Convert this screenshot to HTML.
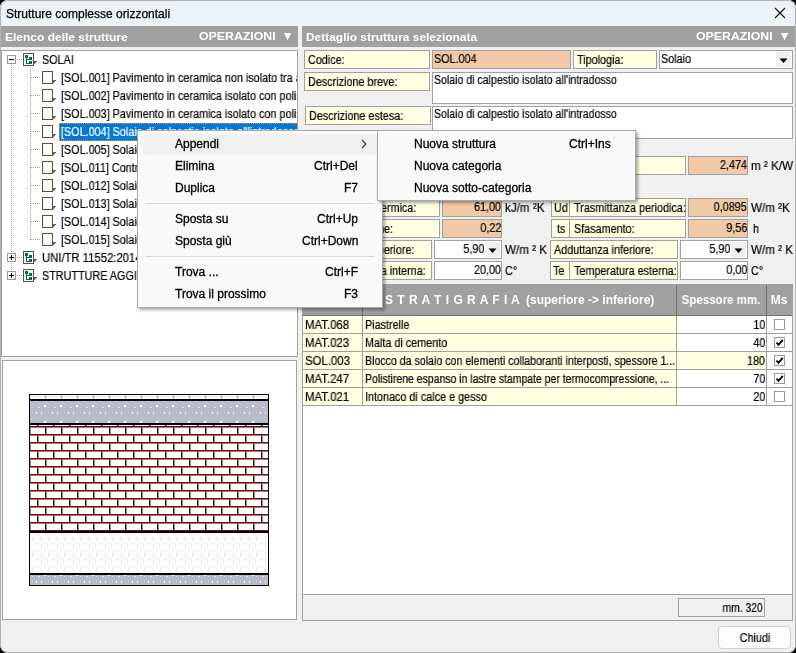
<!DOCTYPE html>
<html><head><meta charset="utf-8">
<style>
*{margin:0;padding:0;box-sizing:border-box}
html,body{width:796px;height:653px;overflow:hidden;background:#000}
body{font-family:"Liberation Sans",sans-serif;font-size:12px;color:#000;position:relative}
.a{position:absolute}
.t{position:absolute;white-space:nowrap;will-change:transform;-webkit-text-stroke:0.2px currentColor}
</style></head><body>
<div class="a" style="left:0;top:0;width:796px;height:653px;background:#f0f0f0;border-radius:8px;overflow:hidden">

<div class="a" style="left:0px;top:0px;width:796px;height:26px;background:#edf2f6;"></div>
<div class="t" style="left:6px;top:7.84px;font-size:12px;line-height:12px;color:#000;transform:scaleX(1.0);transform-origin:0 0;-webkit-text-stroke:0.25px #000">Strutture complesse orizzontali</div>
<svg class="a" style="left:774px;top:7px" width="12" height="12" viewBox="0 0 12 12"><path d="M1 1L11 11M11 1L1 11" stroke="#111" stroke-width="1.1"/></svg>
<div class="a" style="left:1px;top:26px;width:297px;height:21px;background:#a0a0a0;"></div>
<div class="t" style="left:5px;top:31.69px;font-size:11px;line-height:11px;color:#fff;font-weight:bold;-webkit-text-stroke:0;transform:scaleX(1.09);transform-origin:0 0;">Elenco delle strutture</div>
<div class="t" style="left:199px;top:30.69px;font-size:11px;line-height:11px;color:#fff;font-weight:bold;-webkit-text-stroke:0;transform:scaleX(1.12);transform-origin:0 0;">OPERAZIONI</div>
<svg class="a" style="left:284px;top:33px" width="8" height="8" viewBox="0 0 8 8"><path d="M0 0H7.2L3.6 7.2Z" fill="#fff"/></svg>
<div class="a" style="left:302px;top:26px;width:493px;height:21px;background:#a0a0a0;"></div>
<div class="t" style="left:306px;top:31.69px;font-size:11px;line-height:11px;color:#fff;font-weight:bold;-webkit-text-stroke:0;transform:scaleX(1.085);transform-origin:0 0;">Dettaglio struttura selezionata</div>
<div class="t" style="left:696px;top:30.69px;font-size:11px;line-height:11px;color:#fff;font-weight:bold;-webkit-text-stroke:0;transform:scaleX(1.12);transform-origin:0 0;">OPERAZIONI</div>
<svg class="a" style="left:781px;top:33px" width="8" height="8" viewBox="0 0 8 8"><path d="M0 0H7.2L3.6 7.2Z" fill="#fff"/></svg>
<div class="a" style="left:1px;top:50px;width:297px;height:307px;background:#fff;border:1px solid #a0a0a0;"></div>
<div class="a" style="left:2px;top:51px;width:295px;height:305px;overflow:hidden">
<div class="t" style="left:40px;top:2.84px;font-size:12px;line-height:12px;color:#000;transform:scaleX(0.9);transform-origin:0 0;">SOLAI</div>
<div class="t" style="left:59px;top:20.84px;font-size:12px;line-height:12px;color:#000;transform:scaleX(0.9);transform-origin:0 0;">[SOL.001] Pavimento in ceramica non isolato tra ambienti</div>
<div class="t" style="left:59px;top:38.84px;font-size:12px;line-height:12px;color:#000;transform:scaleX(0.9);transform-origin:0 0;">[SOL.002] Pavimento in ceramica isolato con polistirene</div>
<div class="t" style="left:59px;top:56.84px;font-size:12px;line-height:12px;color:#000;transform:scaleX(0.9);transform-origin:0 0;">[SOL.003] Pavimento in ceramica isolato con polistirene espanso</div>
<div class="a" style="left:57px;top:72px;width:344px;height:18px;background:#0078d7;"></div>
<svg class="a" style="left:57px;top:72px" width="250" height="18" shape-rendering="crispEdges"><path d="M0 0.5H250M0 17.5H250M0.5 0V18" stroke="#ff9020" stroke-width="1" stroke-dasharray="1 1"/></svg>
<div class="t" style="left:59px;top:74.84px;font-size:12px;line-height:12px;color:#fff;transform:scaleX(0.9);transform-origin:0 0;">[SOL.004] Solaio di calpestio isolato all&#x27;intradosso</div>
<div class="t" style="left:59px;top:92.84px;font-size:12px;line-height:12px;color:#000;transform:scaleX(0.9);transform-origin:0 0;">[SOL.005] Solaio di copertura</div>
<div class="t" style="left:59px;top:110.84px;font-size:12px;line-height:12px;color:#000;transform:scaleX(0.9);transform-origin:0 0;">[SOL.011] Controsoffitto</div>
<div class="t" style="left:59px;top:128.84px;font-size:12px;line-height:12px;color:#000;transform:scaleX(0.9);transform-origin:0 0;">[SOL.012] Solaio in laterocemento</div>
<div class="t" style="left:59px;top:146.84px;font-size:12px;line-height:12px;color:#000;transform:scaleX(0.9);transform-origin:0 0;">[SOL.013] Solaio in legno</div>
<div class="t" style="left:59px;top:164.84px;font-size:12px;line-height:12px;color:#000;transform:scaleX(0.9);transform-origin:0 0;">[SOL.014] Solaio piano</div>
<div class="t" style="left:59px;top:182.84px;font-size:12px;line-height:12px;color:#000;transform:scaleX(0.9);transform-origin:0 0;">[SOL.015] Solaio inclinato</div>
<div class="t" style="left:40px;top:200.84px;font-size:12px;line-height:12px;color:#000;transform:scaleX(0.94);transform-origin:0 0;">UNI/TR 11552:2014</div>
<div class="t" style="left:40px;top:218.84px;font-size:12px;line-height:12px;color:#000;transform:scaleX(0.9);transform-origin:0 0;">STRUTTURE AGGIUNTIVE</div>
</div>
<svg class="a" style="left:0;top:0" width="300" height="360" shape-rendering="crispEdges"><path d="M11.5 65V271" stroke="#a0a0a0" stroke-width="1" stroke-dasharray="1 1"/><path d="M30.5 67V240" stroke="#a0a0a0" stroke-width="1" stroke-dasharray="1 1"/><path d="M17 59.5H22" stroke="#a0a0a0" stroke-width="1" stroke-dasharray="1 1"/><path d="M31 77.5H41" stroke="#a0a0a0" stroke-width="1" stroke-dasharray="1 1"/><path d="M31 95.5H41" stroke="#a0a0a0" stroke-width="1" stroke-dasharray="1 1"/><path d="M31 113.5H41" stroke="#a0a0a0" stroke-width="1" stroke-dasharray="1 1"/><path d="M31 131.5H41" stroke="#a0a0a0" stroke-width="1" stroke-dasharray="1 1"/><path d="M31 149.5H41" stroke="#a0a0a0" stroke-width="1" stroke-dasharray="1 1"/><path d="M31 167.5H41" stroke="#a0a0a0" stroke-width="1" stroke-dasharray="1 1"/><path d="M31 185.5H41" stroke="#a0a0a0" stroke-width="1" stroke-dasharray="1 1"/><path d="M31 203.5H41" stroke="#a0a0a0" stroke-width="1" stroke-dasharray="1 1"/><path d="M31 221.5H41" stroke="#a0a0a0" stroke-width="1" stroke-dasharray="1 1"/><path d="M31 239.5H41" stroke="#a0a0a0" stroke-width="1" stroke-dasharray="1 1"/><path d="M17 257.5H22" stroke="#a0a0a0" stroke-width="1" stroke-dasharray="1 1"/><path d="M17 275.5H22" stroke="#a0a0a0" stroke-width="1" stroke-dasharray="1 1"/><rect x="7.5" y="55.5" width="8" height="8" fill="#fff" stroke="#9a9a9a"/><rect x="9" y="59" width="5" height="1" fill="#000"/><path d="M34 61L37 61L34 64Z" fill="#606060"/><rect x="23.5" y="53.5" width="10" height="12" fill="#fdfcef" stroke="#5d4f4f"/><rect x="25" y="55" width="3" height="3" fill="#006458"/><rect x="26" y="58" width="1" height="6" fill="#006458"/><rect x="29" y="57" width="3" height="3" fill="#006458"/><rect x="29" y="61" width="3" height="3" fill="#006458"/><rect x="26" y="59" width="3" height="1" fill="#006458"/><rect x="26" y="63" width="3" height="1" fill="#006458"/><path d="M53 80L56 80L53 83Z" fill="#606060"/><rect x="42.5" y="71.5" width="10" height="12" fill="#f8f6e4" stroke="#5d4f4f"/><rect x="44" y="73" width="7" height="9" fill="#fefef8"/><path d="M53 98L56 98L53 101Z" fill="#606060"/><rect x="42.5" y="89.5" width="10" height="12" fill="#f8f6e4" stroke="#5d4f4f"/><rect x="44" y="91" width="7" height="9" fill="#fefef8"/><path d="M53 116L56 116L53 119Z" fill="#606060"/><rect x="42.5" y="107.5" width="10" height="12" fill="#f8f6e4" stroke="#5d4f4f"/><rect x="44" y="109" width="7" height="9" fill="#fefef8"/><path d="M53 134L56 134L53 137Z" fill="#606060"/><rect x="42.5" y="125.5" width="10" height="12" fill="#f8f6e4" stroke="#5d4f4f"/><rect x="44" y="127" width="7" height="9" fill="#fefef8"/><path d="M53 152L56 152L53 155Z" fill="#606060"/><rect x="42.5" y="143.5" width="10" height="12" fill="#f8f6e4" stroke="#5d4f4f"/><rect x="44" y="145" width="7" height="9" fill="#fefef8"/><path d="M53 170L56 170L53 173Z" fill="#606060"/><rect x="42.5" y="161.5" width="10" height="12" fill="#f8f6e4" stroke="#5d4f4f"/><rect x="44" y="163" width="7" height="9" fill="#fefef8"/><path d="M53 188L56 188L53 191Z" fill="#606060"/><rect x="42.5" y="179.5" width="10" height="12" fill="#f8f6e4" stroke="#5d4f4f"/><rect x="44" y="181" width="7" height="9" fill="#fefef8"/><path d="M53 206L56 206L53 209Z" fill="#606060"/><rect x="42.5" y="197.5" width="10" height="12" fill="#f8f6e4" stroke="#5d4f4f"/><rect x="44" y="199" width="7" height="9" fill="#fefef8"/><path d="M53 224L56 224L53 227Z" fill="#606060"/><rect x="42.5" y="215.5" width="10" height="12" fill="#f8f6e4" stroke="#5d4f4f"/><rect x="44" y="217" width="7" height="9" fill="#fefef8"/><path d="M53 242L56 242L53 245Z" fill="#606060"/><rect x="42.5" y="233.5" width="10" height="12" fill="#f8f6e4" stroke="#5d4f4f"/><rect x="44" y="235" width="7" height="9" fill="#fefef8"/><rect x="7.5" y="253.5" width="8" height="8" fill="#fff" stroke="#9a9a9a"/><rect x="9" y="257" width="5" height="1" fill="#000"/><rect x="11" y="255" width="1" height="5" fill="#000"/><path d="M34 259L37 259L34 262Z" fill="#606060"/><rect x="23.5" y="251.5" width="10" height="12" fill="#fdfcef" stroke="#5d4f4f"/><rect x="25" y="253" width="3" height="3" fill="#006458"/><rect x="26" y="256" width="1" height="6" fill="#006458"/><rect x="29" y="255" width="3" height="3" fill="#006458"/><rect x="29" y="259" width="3" height="3" fill="#006458"/><rect x="26" y="257" width="3" height="1" fill="#006458"/><rect x="26" y="261" width="3" height="1" fill="#006458"/><rect x="7.5" y="271.5" width="8" height="8" fill="#fff" stroke="#9a9a9a"/><rect x="9" y="275" width="5" height="1" fill="#000"/><rect x="11" y="273" width="1" height="5" fill="#000"/><path d="M34 277L37 277L34 280Z" fill="#606060"/><rect x="23.5" y="269.5" width="10" height="12" fill="#fdfcef" stroke="#5d4f4f"/><rect x="25" y="271" width="3" height="3" fill="#006458"/><rect x="26" y="274" width="1" height="6" fill="#006458"/><rect x="29" y="273" width="3" height="3" fill="#006458"/><rect x="29" y="277" width="3" height="3" fill="#006458"/><rect x="26" y="275" width="3" height="1" fill="#006458"/><rect x="26" y="279" width="3" height="1" fill="#006458"/></svg>
<div class="a" style="left:2px;top:360px;width:295px;height:260px;background:#fff;border:1px solid #a0a0a0;"></div>
<svg class="a" style="left:29px;top:394px" width="240" height="192" shape-rendering="crispEdges"><defs><pattern id="malta" width="16" height="22" patternUnits="userSpaceOnUse" x="0" y="7"><rect width="16" height="22" fill="#b9bccb"/><rect x="15" y="4" width="1" height="2" fill="#fff"/><rect x="0" y="4" width="1" height="2" fill="#fff"/><rect x="9" y="6" width="2" height="1" fill="#e4e6ee"/><rect x="3" y="6" width="1" height="1" fill="#dcdee8"/><rect x="7" y="11" width="1" height="2" fill="#fff"/><rect x="12" y="11" width="1" height="2" fill="#f4f4f8"/><rect x="3" y="11" width="1" height="1" fill="#d8dae4"/><rect x="7" y="16" width="1" height="1" fill="#d8dae4"/><rect x="2" y="18" width="1" height="1" fill="#d8dae4"/><rect x="15" y="20" width="1" height="2" fill="#fff"/><rect x="0" y="20" width="1" height="2" fill="#fff"/><rect x="7" y="0" width="1" height="1" fill="#d8dae4"/><rect x="1" y="1" width="1" height="1" fill="#e0e2ea"/></pattern><pattern id="malta2" width="16" height="22" patternUnits="userSpaceOnUse" x="0" y="176"><rect width="16" height="22" fill="#b9bccb"/><rect x="15" y="4" width="1" height="2" fill="#fff"/><rect x="0" y="4" width="1" height="2" fill="#fff"/><rect x="9" y="6" width="2" height="1" fill="#e4e6ee"/><rect x="3" y="6" width="1" height="1" fill="#dcdee8"/><rect x="7" y="11" width="1" height="2" fill="#fff"/><rect x="12" y="11" width="1" height="2" fill="#f4f4f8"/><rect x="3" y="11" width="1" height="1" fill="#d8dae4"/><rect x="7" y="16" width="1" height="1" fill="#d8dae4"/><rect x="2" y="18" width="1" height="1" fill="#d8dae4"/><rect x="15" y="20" width="1" height="2" fill="#fff"/><rect x="0" y="20" width="1" height="2" fill="#fff"/><rect x="7" y="0" width="1" height="1" fill="#d8dae4"/><rect x="1" y="1" width="1" height="1" fill="#e0e2ea"/></pattern><pattern id="brick" width="16" height="16" patternUnits="userSpaceOnUse" x="8" y="0"><rect width="16" height="16" fill="#fff"/><rect x="0" y="0" width="16" height="1.45" fill="#800000"/><rect x="0" y="8" width="16" height="1.45" fill="#800000"/><rect x="0" y="1.45" width="16" height="0.6" fill="#7f8a8a"/><rect x="0" y="9.45" width="16" height="0.6" fill="#7f8a8a"/><rect x="8" y="1" width="1.45" height="7" fill="#800000"/><rect x="0" y="9" width="1.45" height="7" fill="#800000"/><rect x="9.45" y="2" width="0.6" height="6" fill="#7f8a8a"/><rect x="1.45" y="10" width="0.6" height="6" fill="#7f8a8a"/></pattern><pattern id="poly" width="16" height="16" patternUnits="userSpaceOnUse" x="3" y="140"><rect width="16" height="16" fill="#fff"/><path d="M3 0.5H6.5L9.5 3.5V6L6.5 9H3L0.5 6V3.5Z" fill="none" stroke="#e3e6e6" stroke-width="1" style="shape-rendering:auto"/><path d="M11.5 8.5H14L16 10.5V13.5L14 15.5H11.5L9.5 13.5V10.5Z" fill="none" stroke="#e3e6e6" stroke-width="1" style="shape-rendering:auto"/><path d="M-4.5 8.5H-2L0 10.5V13.5L-2 15.5H-4.5L-6.5 13.5V10.5Z" fill="none" stroke="#e3e6e6" stroke-width="1" style="shape-rendering:auto"/></pattern></defs><rect x="0" y="0" width="240" height="192" fill="#000"/><rect x="1" y="1" width="238" height="4" fill="#fff"/><rect x="1" y="2" width="238" height="2" fill="#fbeefb"/><rect x="16" y="1" width="1" height="4" fill="#a8a8a8"/><rect x="32" y="1" width="1" height="4" fill="#a8a8a8"/><rect x="48" y="1" width="1" height="4" fill="#a8a8a8"/><rect x="64" y="1" width="1" height="4" fill="#a8a8a8"/><rect x="80" y="1" width="1" height="4" fill="#a8a8a8"/><rect x="96" y="1" width="1" height="4" fill="#a8a8a8"/><rect x="112" y="1" width="1" height="4" fill="#a8a8a8"/><rect x="128" y="1" width="1" height="4" fill="#a8a8a8"/><rect x="144" y="1" width="1" height="4" fill="#a8a8a8"/><rect x="160" y="1" width="1" height="4" fill="#a8a8a8"/><rect x="176" y="1" width="1" height="4" fill="#a8a8a8"/><rect x="192" y="1" width="1" height="4" fill="#a8a8a8"/><rect x="208" y="1" width="1" height="4" fill="#a8a8a8"/><rect x="224" y="1" width="1" height="4" fill="#a8a8a8"/><rect x="1" y="7" width="238" height="22" fill="url(#malta)"/><rect x="1" y="31" width="238" height="106" fill="url(#brick)" style="shape-rendering:auto"/><rect x="1" y="139" width="238" height="40" fill="url(#poly)"/><rect x="1" y="181" width="238" height="10" fill="url(#malta2)"/></svg>
<div class="a" style="left:304px;top:50px;width:126px;height:19px;background:#ffffe1;border:1px solid #a0a0a0;"></div>
<div class="t" style="left:308px;top:53.84px;font-size:12px;line-height:12px;color:#000;transform:scaleX(0.9);transform-origin:0 0;">Codice:</div>
<div class="a" style="left:432px;top:50px;width:139px;height:19px;background:#f0c9a6;border:1px solid #a0a0a0;"></div>
<div class="t" style="left:434px;top:52.84px;font-size:12px;line-height:12px;color:#000;transform:scaleX(0.9);transform-origin:0 0;">SOL.004</div>
<div class="a" style="left:573px;top:50px;width:84px;height:19px;background:#ffffe1;border:1px solid #a0a0a0;"></div>
<div class="t" style="left:577px;top:53.84px;font-size:12px;line-height:12px;color:#000;transform:scaleX(0.9);transform-origin:0 0;">Tipologia:</div>
<div class="a" style="left:659px;top:50px;width:134px;height:19px;background:#fff;border:1px solid #a0a0a0;"></div>
<div class="t" style="left:661px;top:52.84px;font-size:12px;line-height:12px;color:#000;transform:scaleX(0.9);transform-origin:0 0;">Solaio</div>
<div class="a" style="left:776px;top:52px;width:15px;height:15px;background:#f0f0f0;"></div>
<svg class="a" style="left:779px;top:58px" width="9" height="6" viewBox="0 0 9 6"><path d="M0.5 0.5H8.5L4.5 5Z" fill="#000"/></svg>
<div class="a" style="left:304px;top:72px;width:126px;height:19px;background:#ffffe1;border:1px solid #a0a0a0;"></div>
<div class="t" style="left:308px;top:75.84px;font-size:12px;line-height:12px;color:#000;transform:scaleX(0.9);transform-origin:0 0;">Descrizione breve:</div>
<div class="a" style="left:432px;top:72px;width:361px;height:32px;background:#fff;border:1px solid #a0a0a0;"></div>
<div class="t" style="left:434px;top:73.84px;font-size:12px;line-height:12px;color:#000;transform:scaleX(0.88);transform-origin:0 0;">Solaio di calpestio isolato all&#x27;intradosso</div>
<div class="a" style="left:305px;top:106px;width:126px;height:19px;background:#ffffe1;border:1px solid #a0a0a0;"></div>
<div class="t" style="left:309px;top:109.84px;font-size:12px;line-height:12px;color:#000;transform:scaleX(0.9);transform-origin:0 0;">Descrizione estesa:</div>
<div class="a" style="left:432px;top:106px;width:361px;height:33px;background:#fff;border:1px solid #a0a0a0;"></div>
<div class="t" style="left:434px;top:107.84px;font-size:12px;line-height:12px;color:#000;transform:scaleX(0.88);transform-origin:0 0;">Solaio di calpestio isolato all&#x27;intradosso</div>
<div class="a" style="left:304px;top:156px;width:382px;height:19px;background:#ffffe1;border:1px solid #a0a0a0;"></div>
<div class="a" style="left:688px;top:156px;width:60px;height:19px;background:#f0c9a6;border:1px solid #a0a0a0;"></div>
<div class="t" style="right:49px;top:158.84px;font-size:12px;line-height:12px;color:#000;transform:scaleX(0.9);transform-origin:100% 0;">2,474</div>
<div class="t" style="left:751px;top:159.84px;font-size:12px;line-height:12px;color:#000;transform:scaleX(0.97);transform-origin:0 0;">m ² K/W</div>
<div class="a" style="left:304px;top:198px;width:136px;height:19px;background:#ffffe1;border:1px solid #a0a0a0;"></div>
<div class="t" style="right:380px;top:201.84px;font-size:12px;line-height:12px;color:#000;transform:scaleX(0.9);transform-origin:100% 0;">Capacità termica:</div>
<div class="a" style="left:442px;top:198px;width:60px;height:19px;background:#f0c9a6;border:1px solid #a0a0a0;"></div>
<div class="t" style="right:295px;top:200.84px;font-size:12px;line-height:12px;color:#000;transform:scaleX(0.9);transform-origin:100% 0;">61,00</div>
<div class="t" style="left:505px;top:201.84px;font-size:12px;line-height:12px;color:#000;transform:scaleX(0.97);transform-origin:0 0;">kJ/m ²K</div>
<div class="a" style="left:304px;top:219px;width:136px;height:19px;background:#ffffe1;border:1px solid #a0a0a0;"></div>
<div class="t" style="right:403px;top:222.84px;font-size:12px;line-height:12px;color:#000;transform:scaleX(0.9);transform-origin:100% 0;">Fattore di attenuazione:</div>
<div class="a" style="left:442px;top:219px;width:60px;height:19px;background:#f0c9a6;border:1px solid #a0a0a0;"></div>
<div class="t" style="right:295px;top:221.84px;font-size:12px;line-height:12px;color:#000;transform:scaleX(0.9);transform-origin:100% 0;">0,22</div>
<div class="a" style="left:304px;top:240px;width:128px;height:19px;background:#ffffe1;border:1px solid #a0a0a0;"></div>
<div class="t" style="right:382px;top:243.84px;font-size:12px;line-height:12px;color:#000;transform:scaleX(0.9);transform-origin:100% 0;">Adduttanza superiore:</div>
<div class="a" style="left:434px;top:240px;width:68px;height:19px;background:#fff;border:1px solid #a0a0a0;"></div>
<div class="a" style="left:485px;top:242px;width:15px;height:15px;background:#f0f0f0;"></div>
<svg class="a" style="left:488px;top:248px" width="9" height="6" viewBox="0 0 9 6"><path d="M0.5 0.5H8.5L4.5 5Z" fill="#000"/></svg>
<div class="t" style="right:312px;top:242.84px;font-size:12px;line-height:12px;color:#000;transform:scaleX(0.9);transform-origin:100% 0;">5,90</div>
<div class="t" style="left:505px;top:243.84px;font-size:12px;line-height:12px;color:#000;transform:scaleX(0.97);transform-origin:0 0;">W/m ² K</div>
<div class="a" style="left:304px;top:261px;width:128px;height:19px;background:#ffffe1;border:1px solid #a0a0a0;"></div>
<div class="t" style="right:370px;top:264.84px;font-size:12px;line-height:12px;color:#000;transform:scaleX(0.9);transform-origin:100% 0;">Temperatura interna:</div>
<div class="a" style="left:434px;top:261px;width:68px;height:19px;background:#fff;border:1px solid #a0a0a0;"></div>
<div class="t" style="right:295px;top:263.84px;font-size:12px;line-height:12px;color:#000;transform:scaleX(0.9);transform-origin:100% 0;">20,00</div>
<div class="t" style="left:505px;top:264.84px;font-size:12px;line-height:12px;color:#000;transform:scaleX(0.9);transform-origin:0 0;">C°</div>
<div class="a" style="left:551px;top:198px;width:19px;height:19px;background:#ffffe1;border:1px solid #a0a0a0;"></div>
<div class="t" style="left:554px;top:201.84px;font-size:12px;line-height:12px;color:#000;transform:scaleX(0.9);transform-origin:0 0;">Ud</div>
<div class="a" style="left:569px;top:198px;width:117px;height:19px;background:#ffffe1;border:1px solid #a0a0a0;"></div>
<div class="t" style="left:574px;top:201.84px;font-size:12px;line-height:12px;color:#000;transform:scaleX(0.9);transform-origin:0 0;">Trasmittanza periodica:</div>
<div class="a" style="left:688px;top:198px;width:60px;height:19px;background:#f0c9a6;border:1px solid #a0a0a0;"></div>
<div class="t" style="right:49px;top:200.84px;font-size:12px;line-height:12px;color:#000;transform:scaleX(0.9);transform-origin:100% 0;">0,0895</div>
<div class="t" style="left:751px;top:201.84px;font-size:12px;line-height:12px;color:#000;transform:scaleX(0.97);transform-origin:0 0;">W/m ²K</div>
<div class="a" style="left:551px;top:219px;width:19px;height:19px;background:#ffffe1;border:1px solid #a0a0a0;"></div>
<div class="t" style="left:557px;top:222.84px;font-size:12px;line-height:12px;color:#000;transform:scaleX(0.9);transform-origin:0 0;">ts</div>
<div class="a" style="left:569px;top:219px;width:117px;height:19px;background:#ffffe1;border:1px solid #a0a0a0;"></div>
<div class="t" style="left:574px;top:222.84px;font-size:12px;line-height:12px;color:#000;transform:scaleX(0.9);transform-origin:0 0;">Sfasamento:</div>
<div class="a" style="left:688px;top:219px;width:60px;height:19px;background:#f0c9a6;border:1px solid #a0a0a0;"></div>
<div class="t" style="right:49px;top:221.84px;font-size:12px;line-height:12px;color:#000;transform:scaleX(0.9);transform-origin:100% 0;">9,56</div>
<div class="t" style="left:753px;top:222.84px;font-size:12px;line-height:12px;color:#000;transform:scaleX(0.9);transform-origin:0 0;">h</div>
<div class="a" style="left:550px;top:240px;width:128px;height:19px;background:#ffffe1;border:1px solid #a0a0a0;"></div>
<div class="t" style="left:554px;top:243.84px;font-size:12px;line-height:12px;color:#000;transform:scaleX(0.9);transform-origin:0 0;">Adduttanza inferiore:</div>
<div class="a" style="left:680px;top:240px;width:68px;height:19px;background:#fff;border:1px solid #a0a0a0;"></div>
<div class="a" style="left:731px;top:242px;width:15px;height:15px;background:#f0f0f0;"></div>
<svg class="a" style="left:734px;top:248px" width="9" height="6" viewBox="0 0 9 6"><path d="M0.5 0.5H8.5L4.5 5Z" fill="#000"/></svg>
<div class="t" style="right:66px;top:242.84px;font-size:12px;line-height:12px;color:#000;transform:scaleX(0.9);transform-origin:100% 0;">5,90</div>
<div class="t" style="left:751px;top:243.84px;font-size:12px;line-height:12px;color:#000;transform:scaleX(0.97);transform-origin:0 0;">W/m ² K</div>
<div class="a" style="left:550px;top:261px;width:20px;height:19px;background:#ffffe1;border:1px solid #a0a0a0;"></div>
<div class="t" style="left:553px;top:264.84px;font-size:12px;line-height:12px;color:#000;transform:scaleX(0.9);transform-origin:0 0;">Te</div>
<div class="a" style="left:569px;top:261px;width:109px;height:19px;background:#ffffe1;border:1px solid #a0a0a0;"></div>
<div class="t" style="left:574px;top:264.84px;font-size:12px;line-height:12px;color:#000;transform:scaleX(0.9);transform-origin:0 0;">Temperatura esterna:</div>
<div class="a" style="left:680px;top:261px;width:68px;height:19px;background:#fff;border:1px solid #a0a0a0;"></div>
<div class="t" style="right:49px;top:263.84px;font-size:12px;line-height:12px;color:#000;transform:scaleX(0.9);transform-origin:100% 0;">0,00</div>
<div class="t" style="left:751px;top:264.84px;font-size:12px;line-height:12px;color:#000;transform:scaleX(0.9);transform-origin:0 0;">C°</div>
<div class="a" style="left:302px;top:284px;width:491px;height:311px;background:#fff;border:1px solid #a0a0a0;"></div>
<div class="a" style="left:303px;top:285px;width:489px;height:30px;background:#a0a0a0;"></div>
<div class="a" style="left:303px;top:315px;width:489px;height:1px;background:#707070;"></div>
<div class="a" style="left:362px;top:285px;width:1px;height:30px;background:#707070;"></div>
<div class="a" style="left:676px;top:285px;width:1px;height:30px;background:#707070;"></div>
<div class="a" style="left:766px;top:285px;width:1px;height:30px;background:#707070;"></div>
<div class="t" style="left:385px;top:293.84px;font-size:12px;line-height:12px;color:#fff;font-weight:bold;-webkit-text-stroke:0;transform:scaleX(1.0);transform-origin:0 0;letter-spacing:0.5px">S T R A T I G R A F I A</div>
<div class="t" style="left:526px;top:293.84px;font-size:12px;line-height:12px;color:#fff;font-weight:bold;-webkit-text-stroke:0;transform:scaleX(1.0);transform-origin:0 0;">(superiore -&gt; inferiore)</div>
<div class="t" style="left:421px;width:600px;text-align:center;top:293.84px;font-size:12px;line-height:12px;color:#fff;font-weight:bold;-webkit-text-stroke:0;transform:scaleX(0.96);transform-origin:50% 0;">Spessore mm.</div>
<div class="t" style="left:479px;width:600px;text-align:center;top:293.84px;font-size:12px;line-height:12px;color:#fff;font-weight:bold;-webkit-text-stroke:0;transform:scaleX(1.0);transform-origin:50% 0;">Ms</div>
<div class="a" style="left:303px;top:316px;width:59px;height:17px;background:#ffffe1;"></div>
<div class="a" style="left:363px;top:316px;width:313px;height:17px;background:#ffffe1;"></div>
<div class="a" style="left:677px;top:316px;width:89px;height:17px;background:#fff;"></div>
<div class="a" style="left:303px;top:333px;width:489px;height:1px;background:#a0a0a0;"></div>
<div class="t" style="left:305px;top:318.84px;font-size:12px;line-height:12px;color:#000;transform:scaleX(0.95);transform-origin:0 0;">MAT.068</div>
<div class="t" style="left:365px;top:318.84px;font-size:12px;line-height:12px;color:#000;transform:scaleX(0.9);transform-origin:0 0;">Piastrelle</div>
<div class="t" style="right:31px;top:318.84px;font-size:12px;line-height:12px;color:#000;transform:scaleX(0.9);transform-origin:100% 0;">10</div>
<div class="a" style="left:774px;top:319px;width:11px;height:11px;background:#fff;border:1px solid #9a9a9a;"></div>
<div class="a" style="left:303px;top:334px;width:59px;height:17px;background:#ffffe1;"></div>
<div class="a" style="left:363px;top:334px;width:313px;height:17px;background:#ffffe1;"></div>
<div class="a" style="left:677px;top:334px;width:89px;height:17px;background:#fff;"></div>
<div class="a" style="left:303px;top:351px;width:489px;height:1px;background:#a0a0a0;"></div>
<div class="t" style="left:305px;top:336.84px;font-size:12px;line-height:12px;color:#000;transform:scaleX(0.95);transform-origin:0 0;">MAT.023</div>
<div class="t" style="left:365px;top:336.84px;font-size:12px;line-height:12px;color:#000;transform:scaleX(0.9);transform-origin:0 0;">Malta di cemento</div>
<div class="t" style="right:31px;top:336.84px;font-size:12px;line-height:12px;color:#000;transform:scaleX(0.9);transform-origin:100% 0;">40</div>
<div class="a" style="left:774px;top:337px;width:11px;height:11px;background:#fff;border:1px solid #9a9a9a;"></div>
<svg class="a" style="left:775px;top:338px" width="9" height="9" viewBox="0 0 9 9"><path d="M1.5 4.5L3.5 6.8L7.8 1.8" stroke="#000" stroke-width="1.8" fill="none"/></svg>
<div class="a" style="left:303px;top:352px;width:59px;height:17px;background:#ffffe1;"></div>
<div class="a" style="left:363px;top:352px;width:313px;height:17px;background:#ffffe1;"></div>
<div class="a" style="left:677px;top:352px;width:89px;height:17px;background:#ffffe1;"></div>
<div class="a" style="left:303px;top:369px;width:489px;height:1px;background:#a0a0a0;"></div>
<div class="t" style="left:305px;top:354.84px;font-size:12px;line-height:12px;color:#000;transform:scaleX(0.95);transform-origin:0 0;">SOL.003</div>
<div class="t" style="left:365px;top:354.84px;font-size:12px;line-height:12px;color:#000;transform:scaleX(0.884);transform-origin:0 0;">Blocco da solaio con elementi collaboranti interposti, spessore 1...</div>
<div class="t" style="right:31px;top:354.84px;font-size:12px;line-height:12px;color:#000;transform:scaleX(0.9);transform-origin:100% 0;">180</div>
<div class="a" style="left:774px;top:355px;width:11px;height:11px;background:#fff;border:1px solid #9a9a9a;"></div>
<svg class="a" style="left:775px;top:356px" width="9" height="9" viewBox="0 0 9 9"><path d="M1.5 4.5L3.5 6.8L7.8 1.8" stroke="#000" stroke-width="1.8" fill="none"/></svg>
<div class="a" style="left:303px;top:370px;width:59px;height:17px;background:#ffffe1;"></div>
<div class="a" style="left:363px;top:370px;width:313px;height:17px;background:#ffffe1;"></div>
<div class="a" style="left:677px;top:370px;width:89px;height:17px;background:#fff;"></div>
<div class="a" style="left:303px;top:387px;width:489px;height:1px;background:#a0a0a0;"></div>
<div class="t" style="left:305px;top:372.84px;font-size:12px;line-height:12px;color:#000;transform:scaleX(0.95);transform-origin:0 0;">MAT.247</div>
<div class="t" style="left:365px;top:372.84px;font-size:12px;line-height:12px;color:#000;transform:scaleX(0.872);transform-origin:0 0;">Polistirene espanso in lastre stampate per termocompressione, ...</div>
<div class="t" style="right:31px;top:372.84px;font-size:12px;line-height:12px;color:#000;transform:scaleX(0.9);transform-origin:100% 0;">70</div>
<div class="a" style="left:774px;top:373px;width:11px;height:11px;background:#fff;border:1px solid #9a9a9a;"></div>
<svg class="a" style="left:775px;top:374px" width="9" height="9" viewBox="0 0 9 9"><path d="M1.5 4.5L3.5 6.8L7.8 1.8" stroke="#000" stroke-width="1.8" fill="none"/></svg>
<div class="a" style="left:303px;top:388px;width:59px;height:17px;background:#ffffe1;"></div>
<div class="a" style="left:363px;top:388px;width:313px;height:17px;background:#ffffe1;"></div>
<div class="a" style="left:677px;top:388px;width:89px;height:17px;background:#fff;"></div>
<div class="a" style="left:303px;top:405px;width:489px;height:1px;background:#a0a0a0;"></div>
<div class="t" style="left:305px;top:390.84px;font-size:12px;line-height:12px;color:#000;transform:scaleX(0.95);transform-origin:0 0;">MAT.021</div>
<div class="t" style="left:365px;top:390.84px;font-size:12px;line-height:12px;color:#000;transform:scaleX(0.9);transform-origin:0 0;">Intonaco di calce e gesso</div>
<div class="t" style="right:31px;top:390.84px;font-size:12px;line-height:12px;color:#000;transform:scaleX(0.9);transform-origin:100% 0;">20</div>
<div class="a" style="left:774px;top:391px;width:11px;height:11px;background:#fff;border:1px solid #9a9a9a;"></div>
<div class="a" style="left:362px;top:316px;width:1px;height:89px;background:#a0a0a0;"></div>
<div class="a" style="left:676px;top:316px;width:1px;height:89px;background:#a0a0a0;"></div>
<div class="a" style="left:766px;top:316px;width:1px;height:89px;background:#a0a0a0;"></div>
<div class="a" style="left:302px;top:594px;width:491px;height:27px;background:#f0f0f0;border:1px solid #a0a0a0;"></div>
<div class="a" style="left:678px;top:598px;width:87px;height:19px;background:#f0f0f0;border:1px solid #a0a0a0;"></div>
<div class="t" style="right:33px;top:601.84px;font-size:12px;line-height:12px;color:#000;transform:scaleX(0.86);transform-origin:100% 0;">mm. 320</div>
<div class="a" style="left:718px;top:626px;width:73px;height:23px;background:#fdfdfd;border:1px solid #d0d0d0;border-radius:4px"></div>
<div class="t" style="left:455px;width:600px;text-align:center;top:631.84px;font-size:12px;line-height:12px;color:#000;transform:scaleX(0.9);transform-origin:50% 0;">Chiudi</div>
<div class="a" style="left:137px;top:130px;width:246px;height:178px;background:#f9f9f9;border:1px solid #a9a9a9;box-shadow:2px 2px 3px rgba(0,0,0,0.35)"></div>
<div class="a" style="left:143px;top:134px;width:234px;height:21px;background:#f0f0f0;border-radius:4px"></div>
<div class="t" style="left:175px;top:137.84px;font-size:12px;line-height:12px;color:#000;transform:scaleX(1.0);transform-origin:0 0;-webkit-text-stroke:0.3px #000">Appendi</div>
<div class="t" style="left:175px;top:159.84px;font-size:12px;line-height:12px;color:#000;transform:scaleX(1.0);transform-origin:0 0;-webkit-text-stroke:0.3px #000">Elimina</div>
<div class="t" style="right:438px;top:159.84px;font-size:12px;line-height:12px;color:#000;transform:scaleX(1.0);transform-origin:100% 0;-webkit-text-stroke:0.3px #000">Ctrl+Del</div>
<div class="t" style="left:175px;top:181.84px;font-size:12px;line-height:12px;color:#000;transform:scaleX(1.0);transform-origin:0 0;-webkit-text-stroke:0.3px #000">Duplica</div>
<div class="t" style="right:438px;top:181.84px;font-size:12px;line-height:12px;color:#000;transform:scaleX(1.0);transform-origin:100% 0;-webkit-text-stroke:0.3px #000">F7</div>
<div class="t" style="left:175px;top:212.84px;font-size:12px;line-height:12px;color:#000;transform:scaleX(1.0);transform-origin:0 0;-webkit-text-stroke:0.3px #000">Sposta su</div>
<div class="t" style="right:438px;top:212.84px;font-size:12px;line-height:12px;color:#000;transform:scaleX(1.0);transform-origin:100% 0;-webkit-text-stroke:0.3px #000">Ctrl+Up</div>
<div class="t" style="left:175px;top:234.84px;font-size:12px;line-height:12px;color:#000;transform:scaleX(1.0);transform-origin:0 0;-webkit-text-stroke:0.3px #000">Sposta giù</div>
<div class="t" style="right:438px;top:234.84px;font-size:12px;line-height:12px;color:#000;transform:scaleX(1.0);transform-origin:100% 0;-webkit-text-stroke:0.3px #000">Ctrl+Down</div>
<div class="t" style="left:175px;top:265.84px;font-size:12px;line-height:12px;color:#000;transform:scaleX(1.0);transform-origin:0 0;-webkit-text-stroke:0.3px #000">Trova ...</div>
<div class="t" style="right:438px;top:265.84px;font-size:12px;line-height:12px;color:#000;transform:scaleX(1.0);transform-origin:100% 0;-webkit-text-stroke:0.3px #000">Ctrl+F</div>
<div class="t" style="left:175px;top:287.84px;font-size:12px;line-height:12px;color:#000;transform:scaleX(1.0);transform-origin:0 0;-webkit-text-stroke:0.3px #000">Trova il prossimo</div>
<div class="t" style="right:438px;top:287.84px;font-size:12px;line-height:12px;color:#000;transform:scaleX(1.0);transform-origin:100% 0;-webkit-text-stroke:0.3px #000">F3</div>
<svg class="a" style="left:360px;top:139px" width="8" height="10" viewBox="0 0 8 10"><path d="M2 1L6 5L2 9" stroke="#333" stroke-width="1.1" fill="none"/></svg>
<div class="a" style="left:146px;top:203px;width:228px;height:1px;background:#d7d7d7;"></div>
<div class="a" style="left:146px;top:256px;width:228px;height:1px;background:#d7d7d7;"></div>
<div class="a" style="left:377px;top:130px;width:259px;height:71px;background:#f9f9f9;border:1px solid #a9a9a9;box-shadow:2px 2px 3px rgba(0,0,0,0.35)"></div>
<div class="t" style="left:414px;top:137.84px;font-size:12px;line-height:12px;color:#000;transform:scaleX(1.0);transform-origin:0 0;-webkit-text-stroke:0.3px #000">Nuova struttura</div>
<div class="t" style="right:185px;top:137.84px;font-size:12px;line-height:12px;color:#000;transform:scaleX(1.0);transform-origin:100% 0;-webkit-text-stroke:0.3px #000">Ctrl+Ins</div>
<div class="t" style="left:414px;top:159.84px;font-size:12px;line-height:12px;color:#000;transform:scaleX(1.0);transform-origin:0 0;-webkit-text-stroke:0.3px #000">Nuova categoria</div>
<div class="t" style="left:414px;top:181.84px;font-size:12px;line-height:12px;color:#000;transform:scaleX(1.0);transform-origin:0 0;-webkit-text-stroke:0.3px #000">Nuova sotto-categoria</div>
<div class="a" style="left:0;top:0;width:796px;height:653px;border:1px solid #b2b2b2;border-radius:8px"></div>
</div></body></html>
